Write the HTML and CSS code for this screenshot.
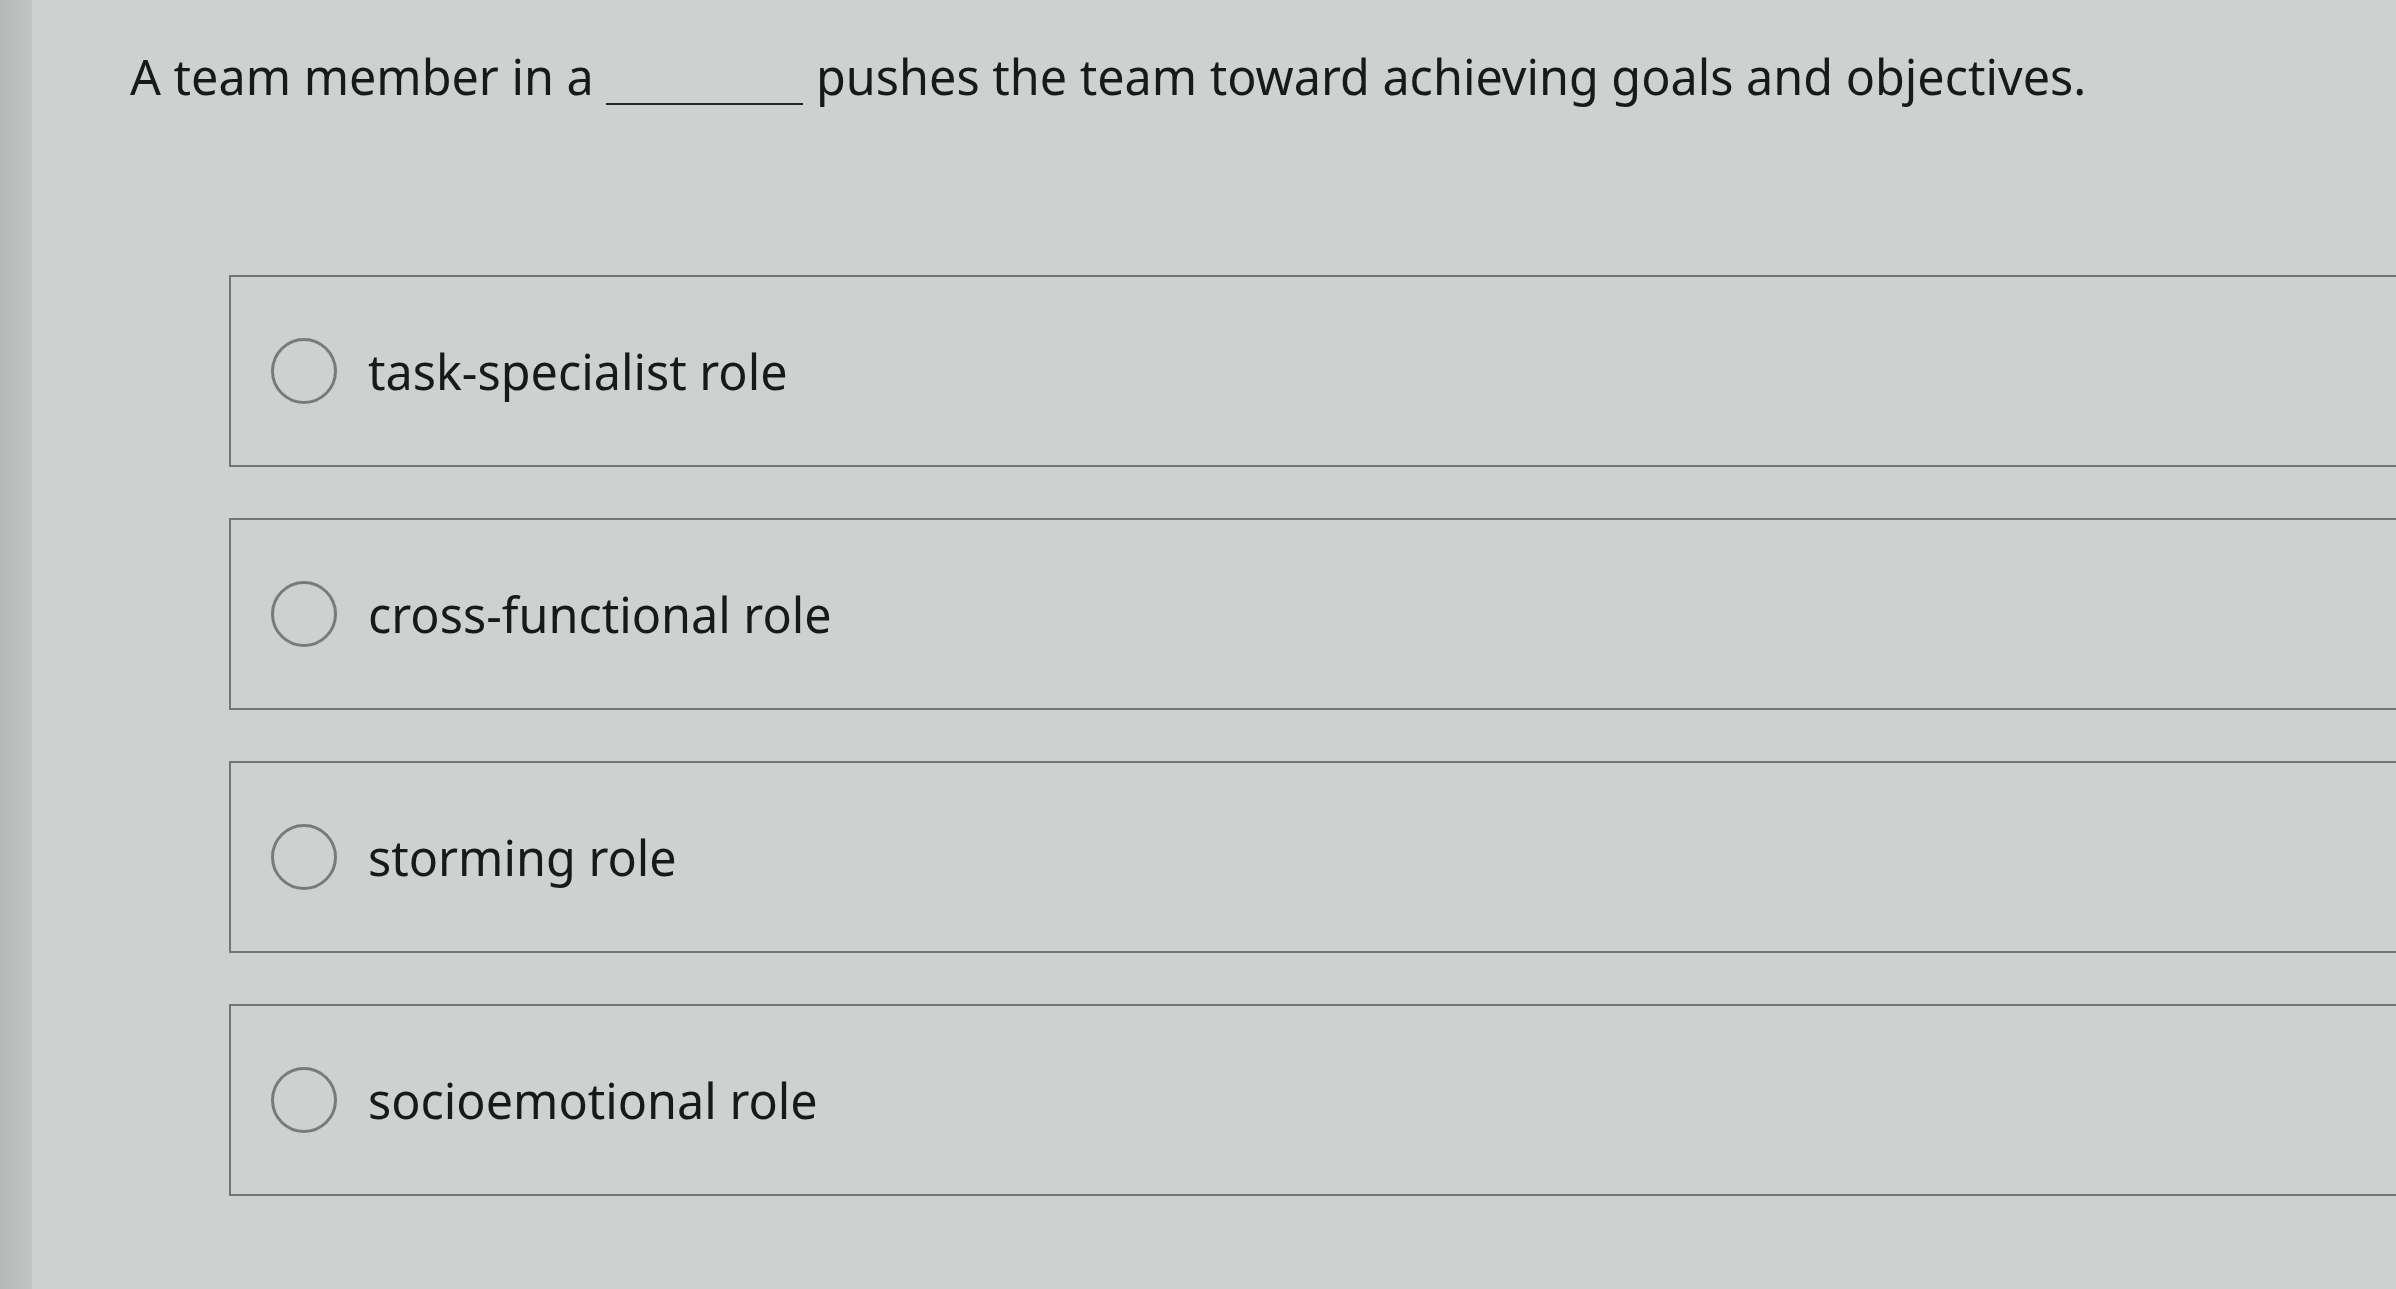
FILE: index.html
```html
<!DOCTYPE html>
<html lang="en">
<head>
<meta charset="utf-8">
<title>Question</title>
<link rel="stylesheet" href="styles.css">
</head>
<body>
<div class="screen">
  <div class="edge"></div>
  <main class="page">
    <p class="question">A team member in a <span class="blank"></span> pushes the team toward achieving goals and objectives.</p>
    <div class="options">
      <label class="option"><span class="radio"></span><span class="label">task-specialist role</span></label>
      <label class="option"><span class="radio"></span><span class="label">cross-functional role</span></label>
      <label class="option"><span class="radio"></span><span class="label">storming role</span></label>
      <label class="option"><span class="radio"></span><span class="label">socioemotional role</span></label>
    </div>
  </main>
</div>
</body>
</html>
```
FILE: styles.css
```css
html, body {
  margin: 0;
  padding: 0;
  height: 100%;
  overflow: hidden;
}
body {
  background: #cdd1d0;
  font-family: "Noto Sans", "Open Sans", sans-serif;
  color: #17191a;
}
.screen {
  display: flex;
  height: 100%;
}
.edge {
  width: 32px;
  flex: 0 0 32px;
  background: linear-gradient(to right, #b4b8b7, #c0c4c3);
}
.page {
  flex: 1;
  padding: 42px 0 0 98px;
  min-width: 0;
}
.question {
  margin: 0;
  font-size: 48.5px;
  line-height: 68px;
  white-space: nowrap;
}
.blank {
  display: inline-block;
  width: 197px;
  height: 10px;
  border-bottom: 2px solid #222425;
  margin-bottom: -10px;
}
.options {
  display: flex;
  flex-direction: column;
  gap: 51px;
  margin: 165px -60px 0 99px;
}
.option {
  display: flex;
  align-items: center;
  height: 188px;
  border: 2px solid #727675;
  border-right: none;
  padding-left: 40px;
}
.radio {
  width: 60px;
  height: 60px;
  border: 3px solid #777b7a;
  border-radius: 50%;
  flex: 0 0 auto;
}
.label {
  margin-left: 31px;
  font-size: 48.5px;
  line-height: 68px;
  color: #17191a;
}
```
